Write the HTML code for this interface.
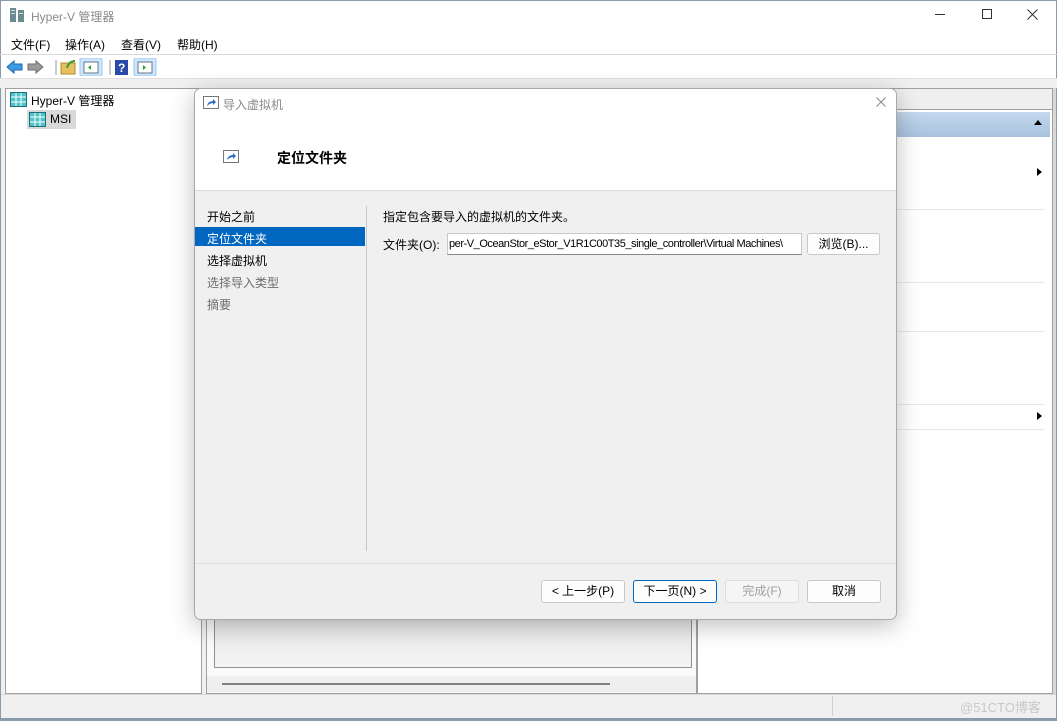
<!DOCTYPE html>
<html><head><meta charset="utf-8"><style>
*{box-sizing:border-box;margin:0;padding:0}
body{width:1057px;height:721px;overflow:hidden;background:#fff;font-family:"Liberation Sans","Noto Sans CJK SC",sans-serif;font-size:12px;color:#000;position:relative}
.a{position:absolute}
.btn{position:absolute;height:23px;border:1px solid #c8c8c8;border-radius:3px;background:#fdfdfd;text-align:center;line-height:21px;font-size:12px}
</style></head><body>
<div class="a" style="left:0;top:0;width:1057px;height:721px;border:1px solid #8a9bb0;background:#fff"></div>
<svg class="a" style="left:9px;top:7px" width="16" height="16"><rect x="1" y="1" width="6" height="14" fill="#6a8a90"/><rect x="9" y="3" width="6" height="12" fill="#6a8a90"/><rect x="2" y="3" width="4" height="1" fill="#cde"/><rect x="2" y="6" width="4" height="1" fill="#cde"/><rect x="10" y="6" width="4" height="1" fill="#cde"/></svg>
<div class="a" style="left:31px;top:8px;color:#8a8a8a;font-size:12px">Hyper-V 管理器</div>
<div class="a" style="left:935px;top:14px;width:10px;height:1px;background:#333"></div>
<div class="a" style="left:982px;top:9px;width:10px;height:10px;border:1px solid #333"></div>
<svg class="a" style="left:1027px;top:9px" width="11" height="11"><path d="M0.5 0.5L10.5 10.5M10.5 0.5L0.5 10.5" stroke="#333" stroke-width="1"/></svg>
<div class="a" style="left:11px;top:36px">文件(F)</div>
<div class="a" style="left:65px;top:36px">操作(A)</div>
<div class="a" style="left:121px;top:36px">查看(V)</div>
<div class="a" style="left:177px;top:36px">帮助(H)</div>
<div class="a" style="left:0;top:54px;width:1057px;height:1px;background:#d8d8d8"></div>
<svg class="a" style="left:5px;top:58px" width="155" height="18">
<path d="M2 9 L9 3 V6 H17 V12 H9 V15 Z" fill="#3c9ae0" stroke="#1a6ab0"/>
<path d="M38 9 L31 3 V6 H23 V12 H31 V15 Z" fill="#9a9a9a" stroke="#707070"/>
<line x1="51" y1="2" x2="51" y2="17" stroke="#999"/>
<rect x="56" y="5" width="14" height="11" fill="#e8c060" stroke="#b08a30"/><path d="M62 10 Q64 3 70 3" stroke="#3a9a3a" stroke-width="2" fill="none"/>
<rect x="75" y="0" width="22" height="18" rx="2" fill="#cde6fb" stroke="#99c8f0"/><rect x="79" y="4" width="14" height="11" fill="#fff" stroke="#678"/><path d="M86 7 L83 9.5 L86 12Z" fill="#2a2"/>
<line x1="105" y1="2" x2="105" y2="17" stroke="#999"/>
<rect x="110" y="2" width="13" height="15" fill="#2a4aa8"/><text x="113" y="14" fill="#fff" font-size="12" font-weight="bold" font-family="Liberation Sans">?</text>
<rect x="129" y="0" width="22" height="18" rx="2" fill="#cde6fb" stroke="#99c8f0"/><rect x="133" y="4" width="14" height="11" fill="#fff" stroke="#678"/><path d="M138 7 L141 9.5 L138 12Z" fill="#2a2"/>
</svg>
<div class="a" style="left:0;top:78px;width:1057px;height:10px;background:#f0f0f0;border-top:1px solid #e0e0e0"></div>
<div class="a" style="left:1px;top:88px;width:4px;height:606px;background:#f0f0f0"></div>
<div class="a" style="left:5px;top:88px;width:197px;height:606px;border:1px solid #a0a0a0;background:#fff"></div>
<svg class="a" style="left:10px;top:92px" width="17" height="15"><rect x="0.5" y="0.5" width="16" height="14" fill="#4fc4c8" stroke="#1f6f78"/><path d="M1 5H16M1 10H16M6 1V14M11 1V14" stroke="#fff"/></svg>
<div class="a" style="left:31px;top:92px">Hyper-V 管理器</div>
<div class="a" style="left:27px;top:110px;width:49px;height:19px;background:#d9d9d9"></div>
<svg class="a" style="left:29px;top:112px" width="17" height="15"><rect x="0.5" y="0.5" width="16" height="14" fill="#4fc4c8" stroke="#1f6f78"/><path d="M1 5H16M1 10H16M6 1V14M11 1V14" stroke="#fff"/></svg>
<div class="a" style="left:50px;top:112px">MSI</div>
<div class="a" style="left:202px;top:88px;width:4px;height:606px;background:#f0f0f0"></div>
<div class="a" style="left:206px;top:88px;width:491px;height:606px;border:1px solid #a0a0a0;background:#fafafa"></div>
<div class="a" style="left:214px;top:600px;width:478px;height:68px;border:1px solid #909090;background:linear-gradient(#e4e4e4,#f4f4f4)"></div>
<div class="a" style="left:207px;top:676px;width:489px;height:16px;background:#efefef"></div>
<div class="a" style="left:222px;top:683px;width:388px;height:2px;background:#808080"></div>
<div class="a" style="left:697px;top:88px;width:356px;height:606px;border:1px solid #a0a0a0;background:#fff"></div>
<div class="a" style="left:698px;top:89px;width:354px;height:21px;background:#efefef;border-bottom:1px solid #a0a0a0"></div>
<div class="a" style="left:698px;top:112px;width:352px;height:25px;background:linear-gradient(#c4d8ee,#a8c2de)"></div>
<div class="a" style="left:1034px;top:120px;width:0;height:0;border-left:4px solid transparent;border-right:4px solid transparent;border-bottom:5px solid #000"></div>
<div class="a" style="left:1037px;top:168px;width:0;height:0;border-top:4px solid transparent;border-bottom:4px solid transparent;border-left:5px solid #000"></div>
<div class="a" style="left:1037px;top:412px;width:0;height:0;border-top:4px solid transparent;border-bottom:4px solid transparent;border-left:5px solid #000"></div>
<div class="a" style="left:698px;top:209px;width:347px;height:1px;background:#e8e8e8"></div>
<div class="a" style="left:698px;top:282px;width:347px;height:1px;background:#e8e8e8"></div>
<div class="a" style="left:698px;top:331px;width:347px;height:1px;background:#e8e8e8"></div>
<div class="a" style="left:698px;top:404px;width:347px;height:1px;background:#e8e8e8"></div>
<div class="a" style="left:698px;top:429px;width:347px;height:1px;background:#e8e8e8"></div>
<div class="a" style="left:1053px;top:88px;width:3px;height:606px;background:#d8d8d8"></div>
<div class="a" style="left:1px;top:694px;width:1055px;height:25px;background:#f0f0f0;border-top:1px solid #d8d8d8"></div>
<div class="a" style="left:832px;top:696px;width:1px;height:20px;background:#d0d0d0"></div>
<div class="a" style="left:960px;top:697px;color:#c8c8c8;font-size:13px">@51CTO博客</div>
<div class="a" style="left:0;top:718px;width:1057px;height:3px;background:#8a9bb0"></div>
<div class="a" style="left:194px;top:88px;width:703px;height:532px;border:1px solid #a8a8a8;border-radius:7px;background:#f0f0f0;box-shadow:0 6px 24px rgba(0,0,0,0.25);overflow:hidden">
 <div class="a" style="left:0;top:0;width:703px;height:102px;background:#fff;border-bottom:1px solid #dcdcdc"></div>
 <svg class="a" style="left:8px;top:7px" width="16" height="13"><rect x="0.5" y="0.5" width="15" height="12" fill="#fff" stroke="#777"/><path d="M4 10 Q5 5 10 5 V3 L13 6 L10 9 V7 Q7 7 4 10Z" fill="#2a6ac8"/></svg>
 <div class="a" style="left:28px;top:7px;color:#8a8a8a">导入虚拟机</div>
 <svg class="a" style="left:681px;top:8px" width="10" height="10"><path d="M0.5 0.5L9.5 9.5M9.5 0.5L0.5 9.5" stroke="#888"/></svg>
 <svg class="a" style="left:28px;top:61px" width="16" height="13"><rect x="0.5" y="0.5" width="15" height="12" fill="#fff" stroke="#777"/><path d="M4 10 Q5 5 10 5 V3 L13 6 L10 9 V7 Q7 7 4 10Z" fill="#2a6ac8"/></svg>
 <div class="a" style="left:82px;top:59px;font-size:14px;font-weight:bold">定位文件夹</div>
 <div class="a" style="left:12px;top:119px">开始之前</div>
 <div class="a" style="left:0;top:138px;width:170px;height:19px;background:#0067c0"></div>
 <div class="a" style="left:12px;top:141px;color:#fff">定位文件夹</div>
 <div class="a" style="left:12px;top:163px">选择虚拟机</div>
 <div class="a" style="left:12px;top:185px;color:#6d6d6d">选择导入类型</div>
 <div class="a" style="left:12px;top:207px;color:#6d6d6d">摘要</div>
 <div class="a" style="left:171px;top:117px;width:1px;height:345px;background:#c8c8c8"></div>
 <div class="a" style="left:188px;top:119px">指定包含要导入的虚拟机的文件夹。</div>
 <div class="a" style="left:188px;top:147px">文件夹(O):</div>
 <div class="a" style="left:252px;top:144px;width:355px;height:22px;background:#fff;border:1px solid #c8c8c8;border-bottom-color:#888;overflow:hidden;white-space:nowrap;font-size:11px;line-height:20px;letter-spacing:-0.45px;padding-left:1px">per-V_OceanStor_eStor_V1R1C00T35_single_controller\Virtual Machines\</div>
 <div class="btn" style="left:612px;top:144px;width:73px;height:22px;line-height:20px">浏览(B)...</div>
 <div class="a" style="left:0;top:474px;width:703px;height:1px;background:#dcdcdc"></div>
 <div class="btn" style="left:346px;top:491px;width:84px">&lt; 上一步(P)</div>
 <div class="btn" style="left:438px;top:491px;width:84px;border:1px solid #0067c0">下一页(N) &gt;</div>
 <div class="btn" style="left:530px;top:491px;width:74px;color:#a0a0a0;background:#f5f5f5;border-color:#ddd">完成(F)</div>
 <div class="btn" style="left:612px;top:491px;width:74px">取消</div>
</div>
</body></html>
